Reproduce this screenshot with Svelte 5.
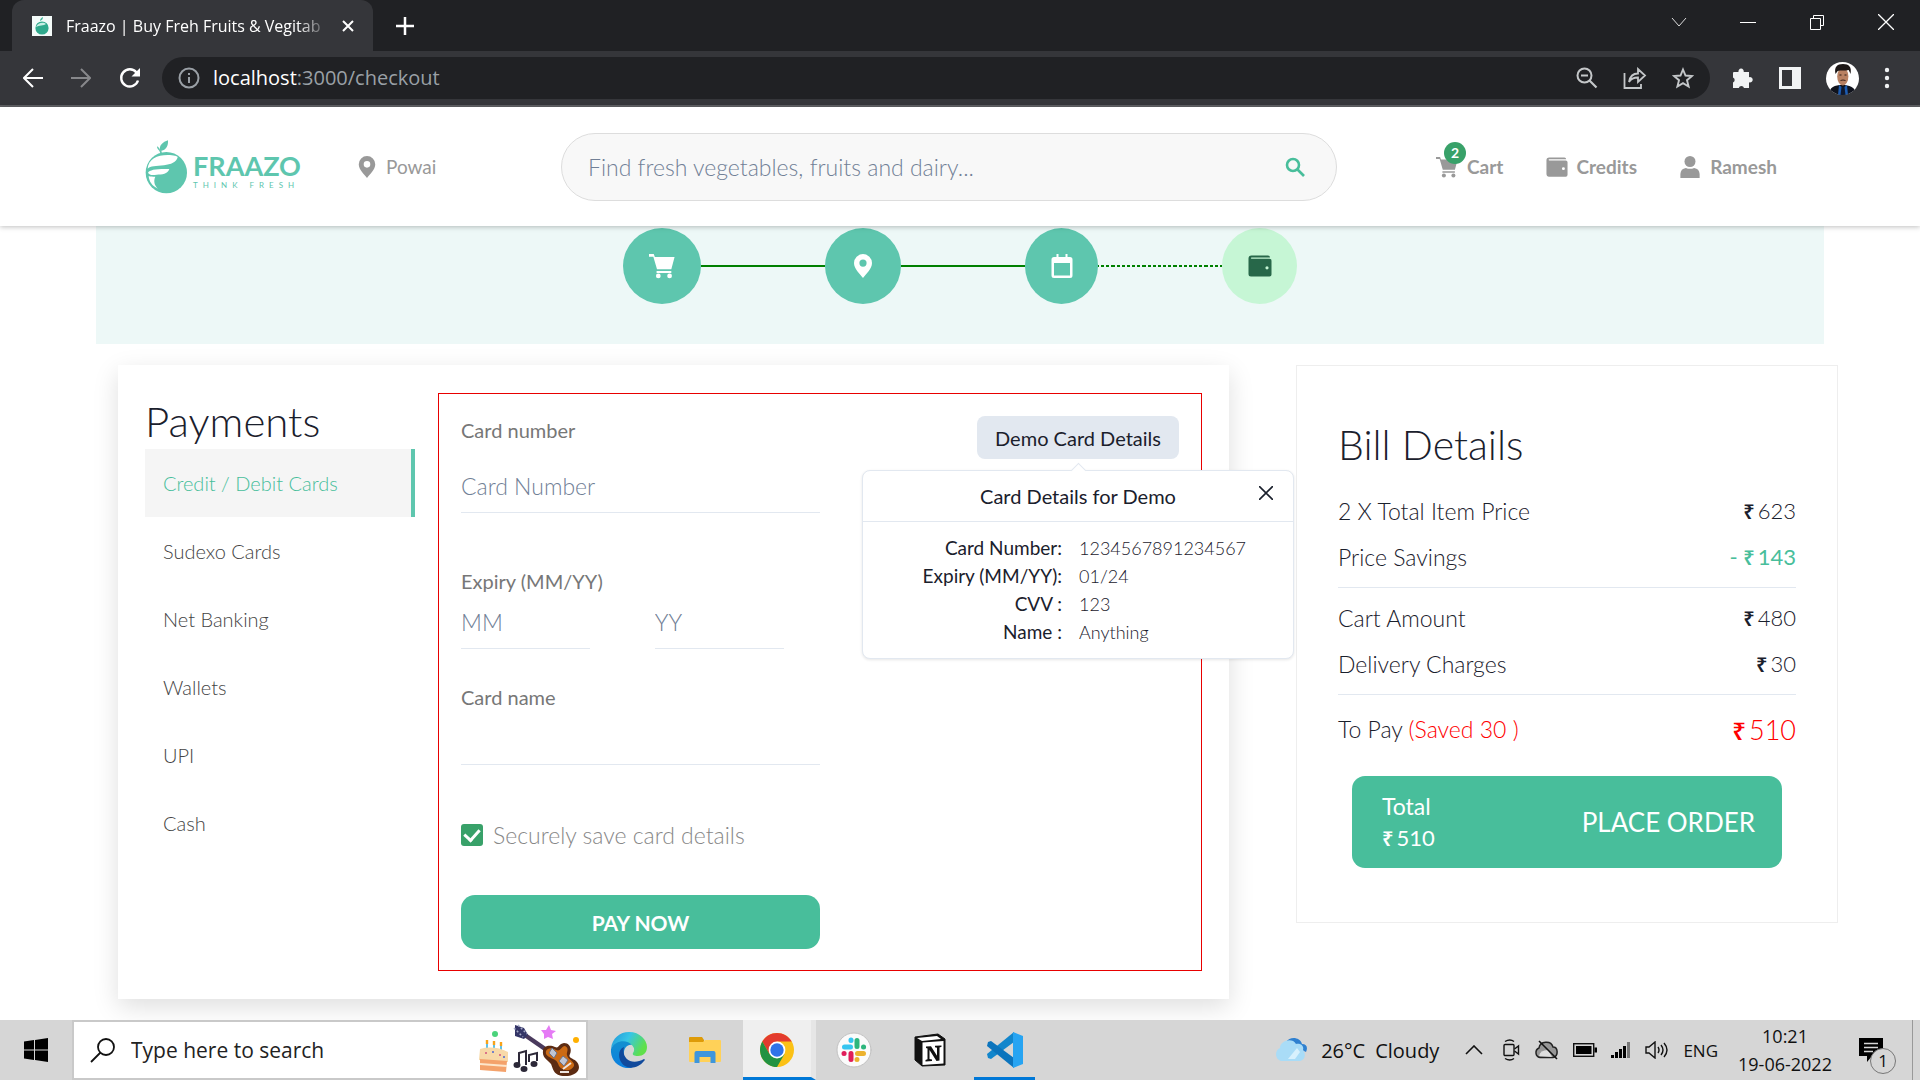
<script>
  const methods = ['Credit / Debit Cards', 'Sudexo Cards', 'Net Banking', 'Wallets', 'UPI', 'Cash'];
  let selected = $state('Credit / Debit Cards');
  let saveCard = $state(true);
  let showDemo = $state(true);

  const demoCard = [
    ['Card Number:', '1234567891234567'],
    ['Expiry (MM/YY):', '01/24'],
    ['CVV :', '123'],
    ['Name :', 'Anything']
  ];
</script>

{#snippet cartIcon()}
  <svg viewBox="0 0 24 24" fill="currentColor" aria-hidden="true">
    <path d="M0 1h4.400l1 2.800H23.600L20.600 15H7.400L4 3.400H0zM7 16.600h13.600v1.800H7z" />
    <circle cx="8.600" cy="21.200" r="2.200" /><circle cx="19" cy="21.200" r="2.200" />
  </svg>
{/snippet}
{#snippet pinIcon()}
  <svg viewBox="0 0 24 24" fill="currentColor" aria-hidden="true">
    <path fill-rule="evenodd" d="M12 0a9 9 0 0 0-9 9c0 6 6 11 9 15 3-4 9-9 9-15a9 9 0 0 0-9-9zm0 5.500a3.600 3.600 0 1 1 0 7.200 3.600 3.600 0 0 1 0-7.200z" />
  </svg>
{/snippet}
{#snippet walletIcon()}
  <svg viewBox="0 0 24 24" fill="currentColor" aria-hidden="true">
    <path fill-rule="evenodd" d="M3.500 1.500H20a2 2 0 0 1 2 2H3.600c-1 0-1 1.300 0 1.300H21.500a2 2 0 0 1 2 2V20.500a2 2 0 0 1-2 2H3a2.500 2.500 0 0 1-2.500-2.500V4.500a3 3 0 0 1 3-3zM19 12.200a1.600 1.600 0 1 0 0 3.200 1.600 1.600 0 0 0 0-3.200z" />
  </svg>
{/snippet}
{#snippet rupee(amount)}<span class="rupee">₹</span>{amount}{/snippet}

<div class="screen">
  <div class="tabstrip">
    <div class="tab">
      <svg class="favicon" viewBox="0 0 20 20" aria-hidden="true">
        <rect width="20" height="20" fill="#f4fbf9" />
        <circle cx="10" cy="12" r="6.600" fill="#2fa98c" />
        <path d="M4 11c2-5 8-5 10-3-2 2-7 1-10 3z" fill="#c8eee4" />
        <path d="M8 5c0-2 1-3 3-4 0 2-1 3-3 4z" fill="#3fb598" />
      </svg>
      <span class="tab-title">Fraazo | Buy Freh Fruits &amp; Vegitab</span>
      <button class="plain" aria-label="Close tab">
        <svg width="14" height="14" viewBox="0 0 14 14" stroke="#fff" stroke-width="2"><path d="M2 2l10 10M12 2L2 12" /></svg>
      </button>
    </div>
    <button class="plain new-tab" aria-label="New tab">
      <svg width="18" height="18" viewBox="0 0 18 18" stroke="#fff" stroke-width="2.500"><path d="M9 0v18M0 9h18" /></svg>
    </button>
    <div class="window-buttons">
      <button class="plain" aria-label="Search tabs"><svg width="16" height="16" viewBox="0 0 16 16" fill="none" stroke="#ddd"><path d="M1 4l7 8 7-8" /></svg></button>
      <button class="plain" aria-label="Minimize"><svg width="16" height="16" viewBox="0 0 16 16" stroke="#fff"><path d="M0 8.500h16" /></svg></button>
      <button class="plain" aria-label="Restore"><svg width="16" height="16" viewBox="0 0 16 16" fill="none" stroke="#fff"><path d="M1.500 4.500h10v11h-10zM4.500 4V1.500h10v10H12" /></svg></button>
      <button class="plain" aria-label="Close"><svg width="16" height="16" viewBox="0 0 16 16" stroke="#fff" stroke-width="1.300"><path d="M0 0l16 16M16 0L0 16" /></svg></button>
    </div>
  </div>

  <div class="toolbar">
    <div class="nav-buttons">
      <button class="plain" aria-label="Back"><svg width="20" height="20" viewBox="0 0 20 20" fill="none" stroke="#fff" stroke-width="2"><path d="M20 10H2M10 1l-9 9 9 9" /></svg></button>
      <button class="plain" aria-label="Forward"><svg width="20" height="20" viewBox="0 0 20 20" fill="none" stroke="#87888b" stroke-width="2"><path d="M0 10h18M10 1l9 9-9 9" /></svg></button>
      <button class="plain" aria-label="Reload"><svg width="22" height="22" viewBox="0 0 22 22" fill="none" stroke="#fff" stroke-width="2.400"><path d="M19 13.500A8.600 8.600 0 1 1 17.500 5.500" /><path d="M21 1v8.500h-8.500z" fill="#fff" stroke="none" /></svg></button>
    </div>
    <div class="omnibox">
      <svg width="22" height="22" viewBox="0 0 22 22" fill="none" stroke="#9aa0a6" stroke-width="2" aria-hidden="true"><circle cx="11" cy="11" r="9.500" /><path d="M11 10v6M11 6v2" /></svg>
      <span class="url"><b>localhost</b>:3000/checkout</span>
      <button class="plain" aria-label="Zoom"><svg width="22" height="22" viewBox="0 0 22 22" fill="none" stroke="#c4c7c9" stroke-width="2"><circle cx="8.500" cy="8.500" r="7" /><path d="M5 8.500h7M13.500 13.500l7 7" stroke-width="2.200" /></svg></button>
      <button class="plain" aria-label="Share"><svg width="24" height="22" viewBox="0 0 24 22" fill="none" stroke="#c4c7c9" stroke-width="1.800"><path d="M1.500 6v15H18v-4M6 15c1-6 4-8.500 9-8.500V2l7 6.500-7 6.500v-4.500c-4 0-7 1-9 4.500z" /></svg></button>
      <button class="plain" aria-label="Bookmark"><svg width="22" height="22" viewBox="0 0 22 22" fill="none" stroke="#c4c7c9" stroke-width="1.900"><path d="M11 2.500l2.500 6 6.500.5-5 4.200 1.600 6.300L11 16.100l-5.600 3.400L7 13.200 2 9l6.500-.5z" /></svg></button>
    </div>
    <div class="extensions">
      <button class="plain" aria-label="Extensions"><svg width="22" height="22" viewBox="0 0 22 22" fill="#f1f3f4"><path d="M2 5h4.500a2.700 2.700 0 1 1 5.200 0H17v5.200a2.700 2.700 0 1 1 0 5V21h-5a2.700 2.700 0 0 0-5.200 0H1v-5.500a2.700 2.700 0 0 0 0-5V6a1 1 0 0 1 1-1z" /></svg></button>
      <button class="plain" aria-label="Side panel"><svg width="22" height="22" viewBox="0 0 22 22"><path fill="#f1f3f4" fill-rule="evenodd" d="M0 0h22v22H0zM3 3h10v16H3z" /></svg></button>
      <button class="plain" aria-label="Profile">
        <svg width="33" height="33" viewBox="0 0 33 33">
          <clipPath id="avatar"><circle cx="16.500" cy="16.500" r="16.500" /></clipPath>
          <g clip-path="url(#avatar)">
            <rect width="33" height="33" fill="#fff" />
            <path d="M3 33c0-8 6-10 13-10s14 2 14 10z" fill="#10131d" />
            <path d="M13 23l4 3 4-3 1 10H12z" fill="#1d5cb0" /><path d="M15.500 25h3l1 8h-5z" fill="#10192e" />
            <ellipse cx="16.800" cy="14.500" rx="5.600" ry="9" fill="#b98162" />
            <path d="M9.500 12C8 5 11 2 17 2s9 3 7.500 10l-1.800-4c-4 1-8 0-11 1z" fill="#1c1716" />
            <path d="M14.500 18.500q2.500-1 5 0" stroke="#3b2219" fill="none" />
            <path d="M13.500 13h2M18.500 13h2" stroke="#2a1a14" />
          </g>
        </svg>
      </button>
      <button class="plain" aria-label="Menu"><svg width="6" height="22" viewBox="0 0 6 22" fill="#f1f3f4"><circle cx="3" cy="3" r="2.200" /><circle cx="3" cy="11" r="2.200" /><circle cx="3" cy="19" r="2.200" /></svg></button>
    </div>
  </div>

  <div class="page">
    <header>
      <a class="logo" href="#home" aria-label="Fraazo">
        <svg width="43" height="54" viewBox="45 56 129 162" aria-hidden="true">
          <circle cx="109" cy="154" r="62" fill="#5ec6ae" />
          <path d="M91 90c-6-18 8-28 23-33 1 15-4 29-20 31l2 8h-5l-3-8c-4-3-7-7-7-13 5 2 8 6 10 15z" fill="#5ec6ae" />
          <path d="M53 142c2-28 28-41 60-41 18 0 30 3 30 7-4 16-20 21-41 24-24 2-41 2-49 10z" fill="#fff" />
          <path d="M54 154c5-9 26-12 64-11-5 16-22 16-38 17-12 2-22 2-26-6z" fill="#fff" />
          <path d="M56 164c5 2 12 2 20 2-6 13-3 26 8 36-18-8-27-22-28-38z" fill="#fff" />
        </svg>
        <span class="wordmark">FRAAZO<small>THINK FRESH</small></span>
      </a>
      <button class="plain location"><span class="icon">{@render pinIcon()}</span>Powai</button>
      <form class="search" onsubmit={(e) => e.preventDefault()}>
        <input type="search" aria-label="Search products" placeholder="Find fresh vegetables, fruits and dairy..." />
        <button class="plain" aria-label="Search"><svg width="20" height="20" viewBox="0 0 20 20" fill="none" stroke="#48be9b" stroke-width="2.600"><circle cx="8" cy="8" r="6" /><path d="M12.500 12.500l6.500 6.500" /></svg></button>
      </form>
      <nav>
        <a href="#cart"><span class="icon">{@render cartIcon()}<span class="badge">2</span></span>Cart</a>
        <a href="#credits"><span class="icon">{@render walletIcon()}</span>Credits</a>
        <a href="#account"><span class="icon"><svg viewBox="0 0 24 24" fill="currentColor" aria-hidden="true"><circle cx="12" cy="6" r="6" /><path d="M1.500 24v-4.500a7 7 0 0 1 6-6.500q4.500 2 9 0a7 7 0 0 1 6 6.500V24z" /></svg></span>Ramesh</a>
      </nav>
    </header>

    <div class="steps">
      <span class="step first">{@render cartIcon()}</span>
      <span class="link"></span>
      <span class="step second">{@render pinIcon()}</span>
      <span class="link"></span>
      <span class="step third"><svg viewBox="0 0 24 24" fill="currentColor" aria-hidden="true"><path fill-rule="evenodd" d="M6.500 0h2v3h7V0h2v3H20a2.500 2.500 0 0 1 2.500 2.500v16A2.500 2.500 0 0 1 20 24H4a2.500 2.500 0 0 1-2.500-2.500v-16A2.500 2.500 0 0 1 4 3h2.500zM4 9v12.500h16V9z" /></svg></span>
      <span class="link dotted"></span>
      <span class="step next">{@render walletIcon()}</span>
    </div>

    <main>
      <section class="payments">
        <div class="methods">
          <h1>Payments</h1>
          <ul>
            {#each methods as method}
              <li><button class:active={selected === method} onclick={() => (selected = method)}>{method}</button></li>
            {/each}
          </ul>
        </div>
        <div class="panel">
          <form onsubmit={(e) => e.preventDefault()}>
            <label for="number">Card number</label>
            <input id="number" class="roomy" placeholder="Card Number" />
            <label for="month" class="after-wide">Expiry (MM/YY)</label>
            <div class="expiry">
              <input id="month" placeholder="MM" />
              <input aria-label="Expiry year" placeholder="YY" />
            </div>
            <label for="name" class="after-narrow">Card name</label>
            <input id="name" />
            <div class="save">
              <input type="checkbox" id="save" bind:checked={saveCard} />
              <label for="save">Securely save card details</label>
            </div>
            <button class="pay">PAY NOW</button>
          </form>
          <div class="demo">
            <button class="demo-button" onclick={() => (showDemo = !showDemo)}>Demo Card Details</button>
            {#if showDemo}
              <div class="popover" role="dialog" aria-label="Card Details for Demo">
                <div class="popover-head">
                  Card Details for Demo
                  <button class="plain close" aria-label="Close" onclick={() => (showDemo = false)}>
                    <svg width="14" height="14" viewBox="0 0 14 14" stroke="#1a202c" stroke-width="1.600"><path d="M0 0l14 14M14 0L0 14" /></svg>
                  </button>
                </div>
                <dl>
                  {#each demoCard as [term, value]}
                    <dt>{term}</dt><dd>{value}</dd>
                  {/each}
                </dl>
              </div>
            {/if}
          </div>
        </div>
      </section>

      <section class="bill">
        <h2>Bill Details</h2>
        <div class="line"><span>2 X Total Item Price</span><span class="amount">{@render rupee(623)}</span></div>
        <div class="line"><span>Price Savings</span><span class="amount saving">- {@render rupee(143)}</span></div>
        <hr />
        <div class="line"><span>Cart Amount</span><span class="amount">{@render rupee(480)}</span></div>
        <div class="line"><span>Delivery Charges</span><span class="amount">{@render rupee(30)}</span></div>
        <hr />
        <div class="line due"><span>To Pay <span class="red">(Saved 30 )</span></span><span class="red total">{@render rupee(510)}</span></div>
        <button class="order">
          <span class="order-total"><span>Total</span><span class="amount">{@render rupee(510)}</span></span>
          <span class="order-label">PLACE ORDER</span>
        </button>
      </section>
    </main>
  </div>

  <footer>
    <button class="plain start" aria-label="Start"><svg width="24" height="24" viewBox="0 0 24 24"><path d="M0 3.500l10-1.400v9.400H0zM11 2l13-2v11.500H11zM0 12.500h10v9.400L0 20.500zM11 12.500h13V24l-13-1.900z" /></svg></button>
    <label class="task-search">
      <svg width="25" height="25" viewBox="0 0 25 25" fill="none" stroke="#111" stroke-width="1.800" aria-hidden="true"><circle cx="16" cy="9" r="8" /><path d="M10.500 14.500L1 24" /></svg>
      <input aria-label="Windows search" placeholder="Type here to search" />
      <svg width="102" height="52" viewBox="0 0 102 52" aria-hidden="true">
        <circle cx="17" cy="10" r="3" fill="#4bd37b" />
        <path d="M71 1l2 5 5 1-4 3 1 5-5-2-4 2 0-5-3-4 5 0z" fill="#e57bf5" />
        <circle cx="98" cy="16" r="3" fill="#ffb000" />
        <path d="M9 18v8M16 18v8M23 19v8" stroke="#5fc0e8" stroke-width="2" />
        <path d="M9 16v4M16 17v4M23 18v4" stroke="#f7a21b" stroke-width="2.400" />
        <path d="M2 25q14-4 28 3v10L1 36z" fill="#f8d9a8" /><path d="M2 35l27 2-1 11L2 46z" fill="#f4a26b" /><path d="M2 40l27 2" stroke="#fde6cb" stroke-width="2" />
        <g fill="#d2527f"><circle cx="8" cy="29" r="1" /><circle cx="22" cy="31" r="1" /></g><g fill="#4b66d3"><circle cx="15" cy="28" r="1" /><circle cx="26" cy="33" r="1" /></g>
        <path d="M41 41V29l7-2v14M51 38V31l8-2v8" stroke="#2c2838" stroke-width="2" fill="none" />
        <g fill="#2c2838"><ellipse cx="39" cy="41" rx="3.500" ry="3" /><ellipse cx="46" cy="45" rx="3.500" ry="3" /><ellipse cx="56" cy="40" rx="3.500" ry="3" /></g>
        <path d="M44 9l26 18" stroke="#4a3a5d" stroke-width="4.500" /><path d="M37 1l9 3 4 7-4 4-9-3z" fill="#343567" />
        <path d="M36 4l9 9M40 1l9 9" stroke="#a5abc8" stroke-width="1.500" stroke-dasharray="2 2" />
        <path d="M65 27c0-6 8-6 12-4 4 2 3-3 9-4 6 0 8 6 6 11-2 4 2 4 6 7 7 7 1 15-11 15-12 0-12-8-14-12-3-4-9-6-8-13z" fill="#5c2b12" />
        <path d="M68 27c2-4 7-3 10-1 5 2 5-4 9-4 5 2 1 7 2 9 1 5 8 6 7 11-3 6-12 5-15 0-2-6-4-6-8-8-3-2-6-3-5-7z" fill="#cb6a14" />
        <path d="M74 24l5 5-3 5-5-5zM85 32l5 4-4 6-5-5z" fill="#bfc5d3" stroke="#6c7286" /><path d="M85 45l8-6M82 48h9" stroke="#eee5e0" stroke-width="2" />
      </svg>
    </label>
    <div class="apps">
      <button class="plain app" aria-label="Edge">
        <svg width="36" height="36" viewBox="0 0 36 36">
          <defs>
            <linearGradient id="edge-top" x1="0" x2="1" y2="0.400"><stop stop-color="#1f93d8" /><stop offset=".5" stop-color="#36c5e6" /><stop offset="1" stop-color="#5fe04b" /></linearGradient>
            <linearGradient id="edge-left" x2="0" y2="1"><stop stop-color="#1390cf" /><stop offset="1" stop-color="#0b7fe0" /></linearGradient>
          </defs>
          <path d="M0 17C1 6 9 0 18 0c11 0 18 8 18 15 0 6-4 9-9 9-4 0-6-1-5-3 3-4 0-9-6-10C8 10 2 13 0 17z" fill="url(#edge-top)" />
          <path d="M0 17c4-9 16-10 21-4-5-1-9 4-8 11 1 6 5 11 9 12C9 38-1 29 0 17z" fill="url(#edge-left)" />
          <path d="M13 15c-3 12 8 19 20 12 1 0 1 1 0 2-7 9-20 9-24-1-2-5-1-11 4-13z" fill="#114a9c" />
        </svg>
      </button>
      <button class="plain app" aria-label="File Explorer">
        <svg width="32" height="28" viewBox="0 0 32 28"><path d="M0 2q0-1 1-1h12l2 3v3H0z" fill="#de9b08" /><path d="M0 6h14l2-2h15q1 0 1 1v20q0 1-1 1H1q-1 0-1-1z" fill="#ffd158" /><path d="M5.500 27V17q0-2 2-2h17q2 0 2 2v10h-5v-6h-11v6z" fill="#3e96db" /></svg>
      </button>
      <button class="plain app chrome" aria-label="Chrome">
        <svg width="34" height="34" viewBox="0 0 34 34"><circle cx="17" cy="17" r="17" fill="#fbc116" /><path d="M2.300 8.500A17 17 0 0 1 31.700 8.500H17L9.600 21.200z" fill="#e33b2e" /><path d="M2.300 8.500A17 17 0 0 0 17 34l7.400-12.800H9.600z" fill="#229342" /><circle cx="17" cy="17" r="8.400" fill="#fff" /><circle cx="17" cy="17" r="6.700" fill="#2f73e8" /></svg>
      </button>
      <button class="plain app" aria-label="Slack">
        <svg width="36" height="36" viewBox="0 0 36 36" stroke-width="5" stroke-linecap="round"><circle cx="18" cy="18" r="17" fill="#fbfbfb" stroke="#c2c2c2" stroke-width="1" /><path d="M8.500 15h6M15 8v.5" stroke="#36c5f0" /><path d="M21 8.500v6M27.500 15h.1" stroke="#2eb67d" /><path d="M27.500 21.500h-6M21 27.500v.1" stroke="#ecb22e" /><path d="M15 21.500v6M8 21.500h.1" stroke="#e01e5a" /></svg>
      </button>
      <button class="plain app" aria-label="Notion">
        <svg width="32" height="34" viewBox="0 0 32 34"><path d="M1 4L24 1l7 5v26L8 33l-7-6z" fill="#111" stroke="#111" stroke-linejoin="round" /><path d="M3 5l20-2 4 3L8 8z" fill="#fff" /><path d="M8.500 9.500l21-1.500v22.500l-21 1.500z" fill="#fff" /><path d="M12 13.500l5-.3 6 9.500v-8l-2-.4v-1.500l6.500-.4v1.400l-2 .8v13l-3 .3-7-11v9l2.500.5V28l-6.500.4V27l2-.8V15.500l-1.500-.5z" fill="#111" /></svg>
      </button>
      <button class="plain app code" aria-label="Visual Studio Code">
        <svg width="36" height="36" viewBox="0 0 36 36"><path d="M27 0L0 22l1 4 3 1 23-17z" fill="#1286cc" /><path d="M4 9L1 10l-1 4 27 22V26z" fill="#0b74bd" /><path d="M26 0l10 4v28l-10 4z" fill="#27a4f2" /></svg>
      </button>
    </div>
    <div class="tray">
      <svg width="33" height="24" viewBox="0 0 33 24" aria-hidden="true"><path d="M12 4c4-6 14-5 16 2 5 0 6 4 4 8l-6-3z" fill="#2f80d0" /><path d="M7 23a7 7 0 0 1-1-13C6 3 18-1 22 6c6-1 8 3 7 6 4 5 1 11-4 11z" fill="#a9dcf7" /><path d="M14 21l9-11 3 4-5 7z" fill="#d8f1fd" /></svg>
      <span class="weather">26°C&ensp;Cloudy</span>
      <svg class="more" width="18" height="10" viewBox="0 0 18 10" fill="none" stroke="#111" stroke-width="1.600" aria-hidden="true"><path d="M1 9l8-8 8 8" /></svg>
      <svg width="18" height="22" viewBox="0 0 18 22" fill="none" stroke="#111" stroke-width="1.400" aria-hidden="true"><rect x="2" y="5.500" width="10" height="11" rx="1" /><path d="M12.500 10l4-3v8l-4-3M3 2.500q5-3 9 0M3 19.500q5 3 9 0" /></svg>
      <svg width="25" height="20" viewBox="0 0 25 20" aria-hidden="true"><path d="M6 17.500a5 5 0 0 1-1-9.500c1-7 12-8 14-1 5 0 6 9 0 10.500z" fill="#979797" stroke="#222" stroke-width="1.500" /><path d="M5 16q1-6 9-6l4 7z" fill="#dedede" /><path d="M5 1l18 18" stroke="#111" stroke-width="1.600" /></svg>
      <svg width="24" height="14" viewBox="0 0 24 14" aria-hidden="true"><rect x=".7" y=".7" width="20" height="12.600" fill="none" stroke="#111" stroke-width="1.400" /><path d="M3 3h15.500v8H3zM21.500 4.500H24v5h-2.500z" /></svg>
      <svg width="20" height="16" viewBox="0 0 20 16" aria-hidden="true"><path d="M0 13h3v3H0zM4 10h3v6H4zM8 7h3v9H8z" /><path d="M12 4h3v12h-3z" /><path d="M16 0h3v16h-3z" fill="#777" /></svg>
      <svg width="24" height="18" viewBox="0 0 24 18" fill="none" stroke="#111" stroke-width="1.400" aria-hidden="true"><path d="M1 6h3l6-5v16l-6-5H1zM13 6q2 3 0 6M16 4q4 5 0 10M19 2q6 7 0 14" /></svg>
      <span class="lang">ENG</span>
      <span class="clock"><span>10:21</span><span>19-06-2022</span></span>
      <span class="notice">
        <svg width="24" height="24" viewBox="0 0 24 24" aria-hidden="true"><path d="M0 0h24v18H13l-5 6v-6H0z" /><path d="M5 5.500h14M5 9.500h14M5 13.500h9" stroke="#d6d6d6" stroke-width="1.400" /></svg>
        <span class="count">1</span>
      </span>
    </div>
    <span class="show-desktop"></span>
  </footer>
</div>

<style>
  :global(body) { margin: 0; background: #fff; }
  * { box-sizing: border-box; }
  .screen {
    display: flex; flex-direction: column; min-height: 100vh;
    font-family: Lato, "Open Sans", sans-serif; color: #1a202c;
  }
  button, input { font: inherit; color: inherit; margin: 0; min-width: 0; }
  button { cursor: pointer; border: 0; }
  .plain { display: flex; align-items: center; padding: 0; background: none; }
  svg { display: block; flex: none; }

  .tabstrip {
    display: flex; align-items: center; height: 51px; padding-left: 12px;
    background: #202124; color: #fff; font-family: "Open Sans", sans-serif;
  }
  .tab {
    display: flex; align-items: center; width: 361px; height: 51px; padding: 0 18px 0 20px;
    border-radius: 12px 12px 0 0; background: #35363a;
  }
  .favicon { width: 20px; height: 20px; }
  .tab-title {
    flex: 1; margin: 0 12px 0 14px; white-space: nowrap; font-size: 16px; line-height: 24px;
    mask-image: linear-gradient(90deg, #000 88%, transparent);
  }
  .new-tab { margin-left: 23px; }
  .window-buttons { display: flex; gap: 53px; margin: 0 26px 8px auto; }

  .toolbar {
    display: flex; align-items: center; height: 56px; padding: 0 30px 0 23px;
    border-bottom: 2px solid #5f6063; background: #35363a; font-family: "Open Sans", sans-serif;
  }
  .nav-buttons { display: flex; gap: 28px; align-items: center; }
  .omnibox {
    display: flex; flex: 1; align-items: center; gap: 25px; height: 42px; margin-left: 21px; padding: 0 16px;
    border-radius: 21px; background: #202124;
  }
  .url { flex: 1; margin-left: -12px; color: #9aa0a6; font-size: 20px; line-height: 28px; }
  .url b { color: #fff; font-weight: 400; }
  .extensions { display: flex; align-items: center; gap: 25px; margin-left: 22px; }

  .page { flex: 1; }
  header {
    position: relative; display: flex; align-items: center; height: 119px; padding: 0 143px 0 145px;
    background: #fff; box-shadow: 0 1px 5px rgba(0, 0, 0, 0.25); color: #999; font-size: 19px;
  }
  .logo { display: flex; align-items: flex-end; gap: 5px; width: 156px; text-decoration: none; color: #5ec6ae; }
  .wordmark { display: flex; flex-direction: column; padding-bottom: 3px; font-size: 27px; font-weight: 700; line-height: 26px; }
  .wordmark small { font-size: 8px; font-weight: 400; line-height: 12px; letter-spacing: 5px; white-space: nowrap; }
  .icon { position: relative; width: 22px; height: 22px; }
  .icon svg { width: 22px; height: 22px; }
  .location { width: 205px; margin-left: 55px; gap: 8px; }
  .search {
    display: flex; flex: 1; align-items: center; height: 68px; margin-right: 99px; padding: 0 31px 0 26px;
    border: 1px solid #ddd; border-radius: 34px; background: #f8f8f8; font-size: 23px;
  }
  .search input { flex: 1; padding: 0; border: 0; outline: 0; background: none; }
  input::placeholder { color: #718096; opacity: 1; font-weight: 300; }
  nav { display: flex; width: 341px; justify-content: space-between; font-weight: 700; }
  nav a { display: flex; align-items: center; gap: 9px; color: inherit; text-decoration: none; }
  .badge {
    position: absolute; top: -14px; left: 8px; width: 22px; height: 22px; border-radius: 50%;
    background: #38a169; color: #fff; font-size: 14px; line-height: 22px; text-align: center;
  }

  .steps {
    display: flex; align-items: center; justify-content: center; margin: 0 5%; padding: 2px 0 40px;
    background: #edf8f7;
  }
  .step {
    display: grid; place-items: center; width: 75px; height: 76px; border-radius: 50%;
    background: #5ec6ae; color: #fff;
  }
  .step svg { width: 24px; height: 24px; }
  .step.first { width: 78px; }
  .step.first svg { width: 26px; height: 26px; }
  .step.second { width: 76px; }
  .step.third { width: 73px; }
  .step.next { background: #c6f6d5; color: #276749; }
  .link { width: 124px; border-top: 2px solid green; }
  .link.dotted { border-top-style: dashed; border-image: repeating-linear-gradient(90deg, green 0 3px, transparent 3px 5px) 2; }

  main {
    display: grid; grid-template-columns: minmax(0, 1111fr) minmax(0, 542fr); gap: 67px;
    align-items: start; padding: 21px 82px 21px 118px;
  }
  .payments {
    display: flex; gap: 23px; padding: 28px 27px;
    background: #fff; box-shadow: 0 8px 24px rgba(0, 0, 0, 0.13);
  }
  .methods { flex: none; width: 270px; }
  h1 { margin: 0; font-size: 42px; font-weight: 300; line-height: 56px; }
  ul { margin: 0; padding: 0; list-style: none; }
  li button {
    width: 100%; padding: 0 18px; border-right: 4px solid transparent; background: none;
    color: #444; font-size: 20px; font-weight: 300; line-height: 68px; text-align: left;
  }
  li .active { border-color: #5ec6ae; background: #f5f5f5; color: #48be9b; }
  .panel {
    display: flex; flex: 1; justify-content: space-between; align-items: flex-start;
    padding: 22px 22px 21px; border: 1px solid #e80000;
  }
  .panel form { display: flex; flex-direction: column; width: 50%; }
  .panel label { color: #777; font-size: 20px; line-height: 28px; }
  .panel form > input, .expiry input {
    width: 100%; height: 51px; margin-top: 3px; padding: 0 0 3px; border: 0; border-bottom: 1px solid #e2e8f0;
    outline: 0; background: none; font-size: 23px;
  }
  .panel form > .roomy { margin-top: 18px; }
  .panel .after-wide { margin-top: 54px; }
  .panel .after-narrow { margin-top: 34px; }
  .expiry { display: grid; grid-template-columns: 36% 36%; gap: 18%; }
  .save { display: flex; align-items: center; gap: 10px; margin-top: 56px; }
  .save input {
    display: grid; place-items: center; width: 22px; height: 22px; border-radius: 3px;
    appearance: none; background: #38a169;
  }
  .save input:checked::after {
    content: ""; width: 7px; height: 12px; margin-bottom: 3px; border: solid #fff; border-width: 0 3px 3px 0;
    transform: rotate(42deg);
  }
  .panel .save label { color: #888; font-size: 23px; font-weight: 300; }
  .pay {
    height: 54px; margin-top: 46px; border-radius: 14px; background: #48be9b;
    color: #fff; font-size: 21px; font-weight: 700;
  }
  .demo { position: relative; }
  .demo-button {
    width: 202px; height: 43px; padding: 0; border-radius: 8px; background: #e2e8f0;
    font-size: 20px; white-space: nowrap;
  }
  .popover {
    position: absolute; top: 54px; right: -115px; z-index: 1; width: 432px;
    border: 1px solid #e2e8f0; border-radius: 8px; background: #fff; box-shadow: 0 1px 3px rgba(0, 0, 0, 0.1);
    font-size: 20px;
  }
  .popover::before {
    content: ""; position: absolute; top: -6px; left: 210px; width: 10px; height: 10px;
    border: solid #e2e8f0; border-width: 1px 0 0 1px; background: #fff; transform: rotate(45deg);
  }
  .popover-head {
    position: relative; border-bottom: 1px solid #e2e8f0; line-height: 50px; text-align: center;
  }
  .close { position: absolute; top: 15px; right: 20px; }
  dl {
    display: grid; grid-template-columns: 199px 1fr; gap: 0 17px; margin: 0; padding: 12px 0 12px;
    font-size: 19px; line-height: 28px;
  }
  dt { text-align: right; }
  dd { margin: 0; font-size: 18px; font-weight: 300; }

  .bill { padding: 49px 41px 54px; border: 1px solid #eee; font-size: 23px; font-weight: 300; }
  h2 { margin: 0 0 13px; font-size: 41px; font-weight: 300; line-height: 60px; }
  .line { display: flex; justify-content: space-between; line-height: 46px; }
  .amount { font-size: 22px; }
  .rupee { margin-right: 3px; font-family: "Noto Sans", sans-serif; font-size: 20px; font-weight: 600; line-height: 1; }
  .saving { color: #48be9b; font-weight: 400; }
  hr { height: 1px; margin: 7px 0; border: 0; background: #e2e8f0; }
  .due { line-height: 55px; }
  .red { color: red; }
  .total { font-size: 27px; }
  .total .rupee { font-size: 24px; }
  .order {
    display: flex; justify-content: space-between; align-items: center; width: calc(100% - 28px); height: 92px;
    margin: 19px 14px 0; padding: 0 27px 0 30px; border-radius: 13px; background: #48be9b; color: #fff;
    font-weight: 400;
  }
  .order-total { display: flex; flex-direction: column; text-align: left; line-height: 32px; }
  .order-label { font-size: 26px; }

  footer {
    display: flex; height: 60px; background: #d6d6d6; color: #111; font-family: "Open Sans", sans-serif;
  }
  .start { flex: none; width: 72px; padding-left: 24px; }
  .task-search {
    display: flex; flex: none; align-items: center; width: 516px; padding: 0 6px 0 16px; border: 2px solid #c9c9c9; background: #fff;
  }
  .task-search input { flex: 1; margin-left: 16px; padding: 0; border: 0; outline: 0; font-size: 21px; }
  .task-search input::placeholder { color: #222; font-weight: 400; }
  .apps { display: flex; flex: none; margin-left: 3px; }
  .app { justify-content: center; width: 76px; }
  .chrome {
    width: 73px; padding-top: 3px; border-right: 5px solid #e6e6e6; border-bottom: 3px solid #0078d7; background: #efefef;
  }
  .code { width: 61px; margin-left: 6px; padding-top: 3px; border-bottom: 3px solid #0078d7; }
  .tray { display: flex; align-items: center; gap: 14px; margin-left: auto; padding-right: 17px; font-size: 17px; }
  .weather { margin-right: 12px; font-size: 20px; white-space: nowrap; }
  .more { margin-right: 5px; }
  .clock {
    display: flex; flex-direction: column; width: 96px; margin: 0 12px 0 5px;
    font-size: 18px; line-height: 28px; text-align: center; white-space: nowrap;
  }
  .notice { position: relative; width: 36px; }
  .count {
    position: absolute; top: 10px; left: 11px; width: 26px; height: 26px; border: 1px solid #777; border-radius: 50%;
    background: #d6d6d6; line-height: 24px; text-align: center;
  }
  .show-desktop { width: 8px; border-left: 1px solid #999; }
</style>
